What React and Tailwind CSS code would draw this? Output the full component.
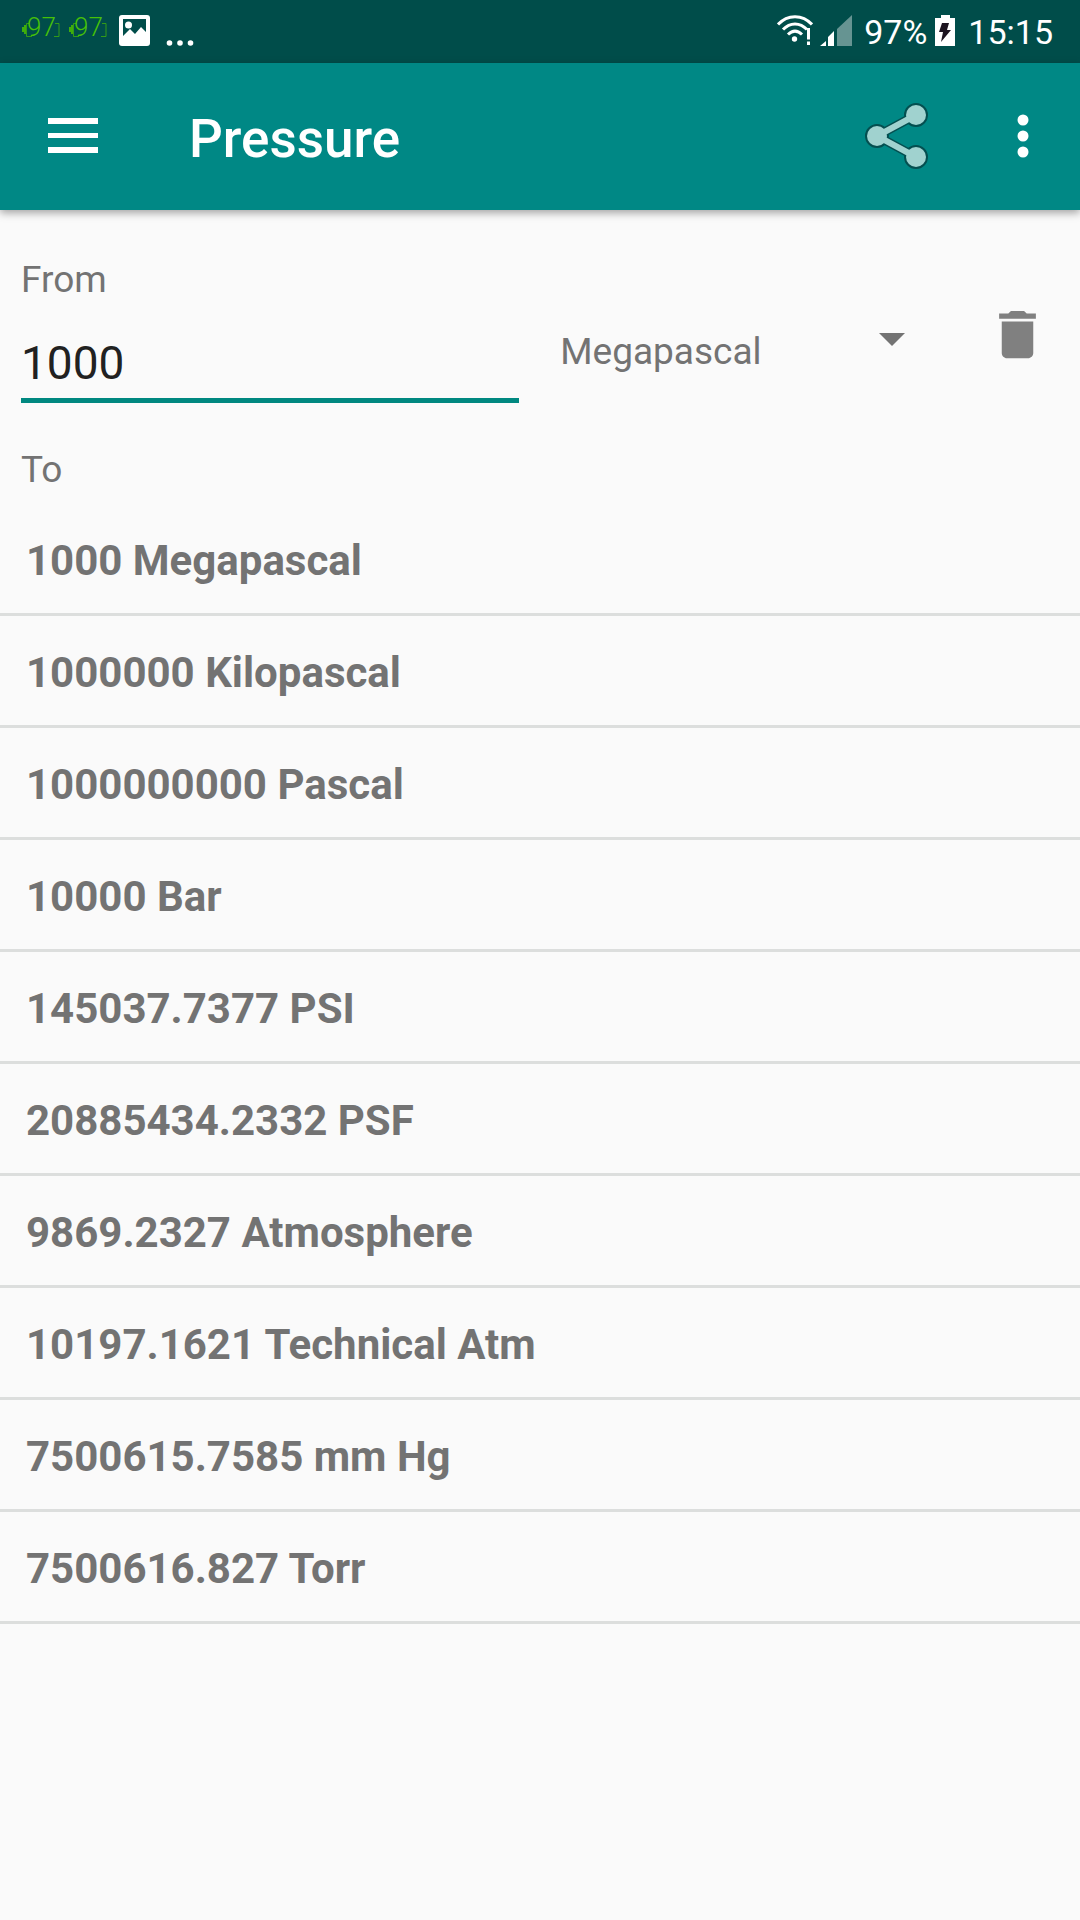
import { useState } from 'react';

const RESULTS = [
  { value: '1000', unit: 'Megapascal' },
  { value: '1000000', unit: 'Kilopascal' },
  { value: '1000000000', unit: 'Pascal' },
  { value: '10000', unit: 'Bar' },
  { value: '145037.7377', unit: 'PSI' },
  { value: '20885434.2332', unit: 'PSF' },
  { value: '9869.2327', unit: 'Atmosphere' },
  { value: '10197.1621', unit: 'Technical Atm' },
  { value: '7500615.7585', unit: 'mm Hg' },
  { value: '7500616.827', unit: 'Torr' },
];

// Green battery level shown as a notification icon
function BatteryLevel() {
  return (
    <div className="relative h-9 w-[38px]">
      <svg className="absolute inset-0" width="38" height="36" viewBox="0 0 38 36" fill="none" aria-hidden="true">
        <path d="M1 18v5M3 16v9" stroke="#3fae0b" strokeWidth="2" />
        <path d="M7 14.500H4.500v13H10M33 14.500h4v13h-5" stroke="#3fae0b" strokeOpacity="0.8" />
      </svg>
      <span className="relative block pl-[5px] text-[26px] leading-9 font-light text-[#46c008]">97</span>
    </div>
  );
}

function StatusBar() {
  return (
    <div className="flex h-[63px] items-start justify-between bg-[#004d4a] pl-[22px] pr-[27px] text-white">
      <div className="flex items-start pt-[15px]">
        <div className="-mt-[6px] flex gap-[9px]">
          <BatteryLevel />
          <BatteryLevel />
        </div>
        <svg className="ml-3" width="31" height="31" viewBox="0 0 31 31" aria-hidden="true">
          <rect width="31" height="31" rx="3" fill="#fff" />
          <path d="M4 4h23v13l-5-5-6 7-5-5-7 7z" fill="#004d4a" />
          <circle cx="9.500" cy="10" r="3.500" fill="#fff" />
        </svg>
        <svg className="ml-4" width="28" height="31" viewBox="0 0 28 31" fill="#fff" aria-hidden="true">
          <circle cx="3.500" cy="28" r="2.800" />
          <circle cx="14" cy="28" r="2.800" />
          <circle cx="24.500" cy="28" r="2.800" />
        </svg>
      </div>

      <div className="flex items-start pt-[14px]">
        <svg width="36" height="32" viewBox="0 0 36 32" fill="none" stroke="#fff" strokeWidth="3" aria-hidden="true">
          <path d="M1 10.500c9.500-10.500 24.500-10.500 34 0" />
          <path d="M6 15.500c7-7.500 17-7.500 24 0" />
          <path d="M11 20.500c4.500-4.500 9.500-4.500 14 0" />
          <circle cx="17.500" cy="25" r="2.700" fill="#fff" stroke="none" />
          <path d="M31.500 14v11.500M31.500 27.500v3.500" />
        </svg>
        <svg className="ml-[7px]" width="32" height="32" viewBox="0 0 32 32" aria-hidden="true">
          <path d="M0 32l6-5v5zM8 32v-9l6-6v15z" fill="#fff" />
          <path d="M17 32V15L32 1v31z" fill="#fff" fillOpacity="0.4" />
        </svg>
        <span className="ml-3 text-[34px] leading-9">97%</span>
        <svg className="ml-2" width="21" height="32" viewBox="0 0 21 32" aria-hidden="true">
          <path d="M6 1h9v3h5v28H0V4h6z" fill="#fff" />
          <path d="M7 9h7l-2 7h4L6 28l2-10H4z" fill="#1d1420" />
        </svg>
        <span className="ml-3 text-[34px] leading-9">15:15</span>
      </div>
    </div>
  );
}

function AppBar() {
  return (
    <header className="flex h-[147px] items-center bg-[#008885] pb-[2px] pl-12 pr-[41px] text-white shadow-[0_3px_8px_rgba(0,0,0,0.35)]">
      <button type="button" aria-label="Open menu">
        <svg width="50" height="36" viewBox="0 0 50 36" fill="#fff">
          <path d="M0 0h50v6H0zM0 15h50v5H0zM0 29h50v6H0z" />
        </svg>
      </button>
      <h1 className="ml-[91px] flex-1 pt-[6px] text-[53px] leading-[60px] font-medium">Pressure</h1>
      <button type="button" aria-label="Share">
        <svg width="64" height="66" viewBox="0 0 64 66">
          <g stroke="#044f50" strokeWidth="2" fill="#044f50">
            <path d="M51 12 12 33l39 21" fill="none" strokeWidth="9" />
            <circle cx="51" cy="12" r="11" />
            <circle cx="12" cy="33" r="11" />
            <circle cx="51" cy="54" r="11" />
          </g>
          <g fill="#a0d2cf">
            <path d="M51 12 12 33l39 21" fill="none" stroke="#a0d2cf" strokeWidth="6" />
            <circle cx="51" cy="12" r="10" />
            <circle cx="12" cy="33" r="10" />
            <circle cx="51" cy="54" r="10" />
          </g>
        </svg>
      </button>
      <button type="button" aria-label="More options" className="ml-[78px]">
        <svg width="32" height="44" viewBox="0 0 32 44" fill="#fff">
          <circle cx="16" cy="6" r="5.500" />
          <circle cx="16" cy="22" r="5.500" />
          <circle cx="16" cy="38" r="5.500" />
        </svg>
      </button>
    </header>
  );
}

export default function App() {
  const [amount, setAmount] = useState('1000');
  const [unit, setUnit] = useState('Megapascal');

  return (
    <div className="min-h-screen bg-[#fafafa] font-[Roboto,sans-serif] text-[#737373]">
      <StatusBar />
      <AppBar />

      <main className="pt-12">
        <div className="flex px-[21px]">
          <div className="flex w-[48%] flex-col gap-[33px]">
            <label htmlFor="amount" className="text-[37px] leading-[44px]">
              From
            </label>
            <input
              id="amount"
              type="text"
              inputMode="decimal"
              value={amount}
              onChange={(e) => setAmount(e.target.value)}
              className="h-[68px] w-full border-b-[5px] border-[#008880] pb-[7px] text-[46px] leading-[56px] text-[#212121] outline-none"
            />
          </div>

          <div className="ml-[41px] flex flex-1 items-center pt-[18px]">
            <div className="relative flex-1">
              <select
                aria-label="Unit"
                value={unit}
                onChange={(e) => setUnit(e.target.value)}
                className="h-[68px] w-full appearance-none pt-6 text-[37px] leading-[44px] outline-none"
              >
                {RESULTS.map((r) => (
                  <option key={r.unit}>{r.unit}</option>
                ))}
              </select>
              <svg
                className="pointer-events-none absolute inset-y-0 right-[25px] my-auto"
                width="26"
                height="13"
                viewBox="0 0 26 13"
                fill="#737373"
                aria-hidden="true"
              >
                <path d="M0 0h26L13 13z" />
              </svg>
            </div>
            <button type="button" aria-label="Clear" onClick={() => setAmount('')} className="ml-14 mr-[10px] pb-[10px]">
              <svg width="63" height="63" viewBox="0 0 24 24" fill="#808080">
                <path d="M6 19c0 1.100.9 2 2 2h8c1.100 0 2-.9 2-2V7H6v12zM19 4h-3.500l-1-1h-5l-1 1H5v2h14V4z" />
              </svg>
            </button>
          </div>
        </div>

        <h2 className="mt-[45px] px-[21px] text-[37px] leading-[44px]">To</h2>
        <ul className="mt-3">
          {RESULTS.map((r) => (
            <li
              key={r.unit}
              className="border-b-[3px] border-[#dcdedd] px-[26px] pt-8 pb-[27px] text-[42px] leading-[50px] font-bold"
            >
              {r.value} {r.unit}
            </li>
          ))}
        </ul>
      </main>
    </div>
  );
}
